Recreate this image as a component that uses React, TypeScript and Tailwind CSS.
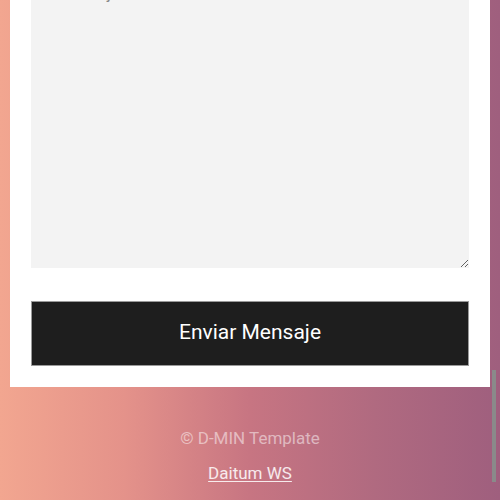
import React from "react";

const App = () => {
  return (
    <div className="relative h-[500px] w-[500px] overflow-hidden bg-[linear-gradient(90deg,#f2a690_0%,#e4928a_25%,#c77582_50%,#b06a80_75%,#9f5f7e_100%)] font-['Roboto','Liberation_Sans',sans-serif]">
      <div className="mx-[10px] -mt-[30px] flex flex-col bg-white px-[21px] pb-[21px]">
        <textarea
          placeholder="Tu mensaje"
          className="h-[298px] w-full bg-[#f3f3f3] px-[6px] py-[12px] text-[16px] leading-[24px] text-[#555] outline-none placeholder:text-[#888]"
        />
        <button className="mt-[33px] h-[65px] w-full border border-[#9a9a9a] bg-[#1e1e1e] pb-[2px] text-[21px] text-white">
          Enviar Mensaje
        </button>
      </div>
      <div className="flex flex-col items-center pt-[40px]">
        <p className="text-[17px] leading-[22px] text-white/50">
          © D-MIN Template
        </p>
        <a className="mt-[13px] text-[17px] leading-[22px] text-white/85 underline underline-offset-2">
          Daitum WS
        </a>
      </div>
      <div className="absolute left-[492px] top-[370px] h-[112px] w-[4px] bg-[#8a8a8a]" />
    </div>
  );
};

export default App;
